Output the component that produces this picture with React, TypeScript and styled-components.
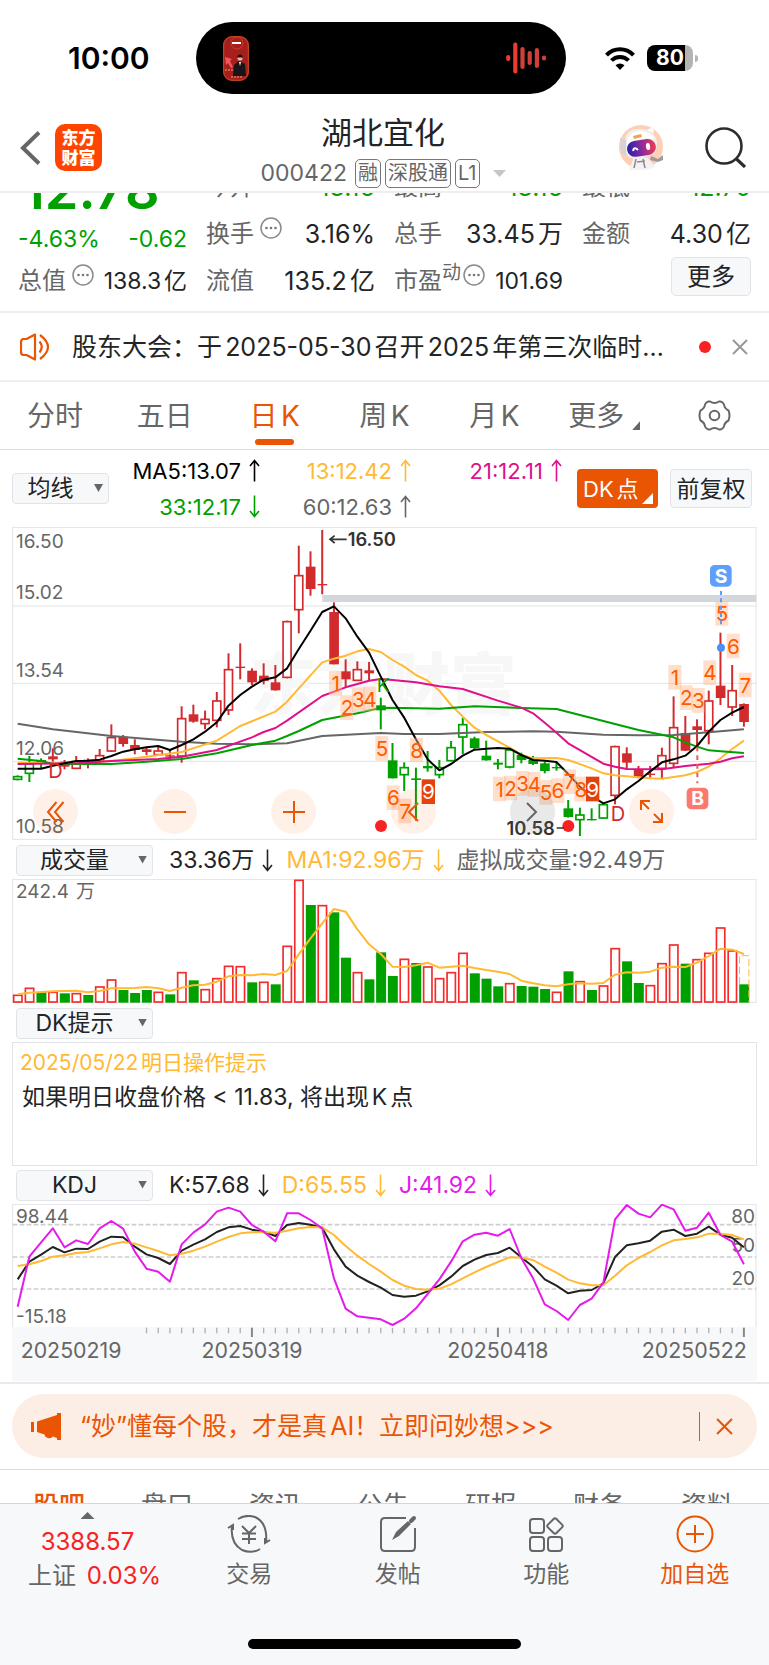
import React from "react";
import styled, { createGlobalStyle } from "styled-components";

const c = {
  accent: "#ea5504",
  text: "#222426",
  sub: "#666666",
  green: "#00a000",
  red: "#f82222",
  candle: "#d12b2e",
  gold: "#ffb933",
  pink: "#e0108c",
  violet: "#e41bea",
  line: "#e1e3e8",
  panel: "#f7f8fa",
};

const Global = createGlobalStyle`
  *, *::before, *::after { box-sizing: border-box; }
  body { margin: 0; background: #fff; color: ${c.text}; font-family: Inter, "Noto Sans CJK SC", sans-serif; text-autospace: normal; }
  button, select { font: inherit; color: inherit; margin: 0; }
  button { padding: 0; border: 0; background: none; cursor: pointer; }
  a { color: inherit; text-decoration: none; }
  h1, p { margin: 0; font-weight: 400; }
  svg { display: block; flex: none; }
`;

/* ---------- status bar ---------- */
const StatusBar = styled.div`
  display: grid;
  grid-template-columns: 196px 1fr 203px;
  align-items: center;
  height: 110px;
  padding-top: 6px;
`;
const Clock = styled.time`
  padding-left: 68px;
  font-size: 30px;
  line-height: 36px;
  font-weight: 600;
  color: #000;
`;
const Island = styled.div`
  display: flex;
  align-items: center;
  justify-content: space-between;
  height: 72px;
  padding: 0 20px 0 27px;
  border-radius: 36px;
  background: #000;
`;
const StatusIcons = styled.div`
  display: flex;
  align-items: center;
  gap: 12px;
  padding-left: 39px;
`;
const Battery = styled.div`
  display: flex;
  align-items: center;
  gap: 2px;
  &::after { content: ""; width: 3px; height: 7px; border-radius: 0 4px 4px 0; background: #b4b4b4; }
`;
const BatteryBody = styled.div`
  width: 46px;
  height: 26px;
  padding-left: 9px;
  border-radius: 8px;
  background: linear-gradient(90deg, #000 82%, #b4b4b4 82%);
  color: #fff;
  font-size: 21px;
  line-height: 26px;
  font-weight: 700;
`;

/* ---------- header ---------- */
const Header = styled.header`
  position: relative;
  z-index: 1;
  display: grid;
  grid-template-columns: 1fr auto 1fr;
  height: 83px;
  padding: 0 23px 0 20px;
  background: #fff;
  border-bottom: 2px solid #eeeeee;
`;
const HeaderSide = styled.div<{ $end?: boolean }>`
  display: flex;
  align-items: center;
  gap: ${(p) => (p.$end ? 41 : 14)}px;
  justify-content: ${(p) => (p.$end ? "flex-end" : "flex-start")};
  height: 75px;
`;
const AppLogo = styled.a`
  display: grid;
  place-content: center;
  width: 47px;
  height: 47px;
  border-radius: 10px;
  background: #ff4400;
  color: #fff;
  font-size: 17px;
  line-height: 20px;
  font-weight: 900;
  text-align: center;
`;
const TitleBlock = styled.div`
  display: flex;
  flex-direction: column;
  align-items: center;
`;
const Title = styled.h1`
  font-size: 31px;
  line-height: 45px;
`;
const SubTitle = styled.div`
  display: flex;
  align-items: center;
  gap: 4px;
  font-size: 23px;
  line-height: 36px;
  color: ${c.sub};
`;
const Code = styled.span`
  margin-right: 4px;
`;
const Badge = styled.span`
  height: 29px;
  padding: 0 2px;
  border: 1px solid #777;
  border-radius: 5px;
  font-size: 20px;
  line-height: 26px;
`;

/* ---------- quote figures ---------- */
const Quote = styled.section`
  overflow: hidden;
  padding: 0 18px 7px;
  border-bottom: 2px solid #eeeeee;
`;
const QuoteGrid = styled.div`
  display: grid;
  grid-template-columns: repeat(4, 1fr);
  grid-auto-rows: 47px;
  column-gap: 19px;
  margin-top: -30px;
`;
const PriceCell = styled.div`
  grid-row: span 2;
  display: flex;
  flex-direction: column;
  color: ${c.green};
`;
const Price = styled.strong`
  padding-left: 4px;
  font-size: 54px;
  line-height: 54px;
  font-weight: 600;
`;
const Change = styled.div`
  display: flex;
  justify-content: space-between;
  font-size: 23px;
  line-height: 44px;
`;
const Figure = styled.div<{ $green?: boolean; $compact?: boolean }>`
  display: flex;
  align-items: center;
  white-space: nowrap;
  font-size: 24px;
  line-height: 32px;
  color: ${c.sub};
  svg { margin: 0 0 11px 6px; }
  sup { font-size: 19px; line-height: 20px; margin-bottom: 15px; vertical-align: baseline; }
  sup + svg { margin-left: 2px; }
  b {
    margin-left: auto;
    font-weight: 400;
    font-size: ${(p) => (p.$compact ? 23 : 25)}px;
    color: ${(p) => (p.$green ? c.green : c.text)};
  }
`;
const MoreButton = styled.button`
  justify-self: end;
  align-self: start;
  width: 80px;
  height: 39px;
  border: 1px solid ${c.line};
  border-radius: 5px;
  background: ${c.panel};
  font-size: 24px;
  line-height: 34px;
`;

/* ---------- notice ---------- */
const Notice = styled.section`
  display: flex;
  align-items: center;
  height: 69px;
  padding: 0 21px 0 20px;
  border-bottom: 2px solid #eeeeee;
`;
const NoticeText = styled.a`
  flex: 1;
  min-width: 0;
  margin: 0 26px 0 20px;
  overflow: hidden;
  white-space: nowrap;
  text-overflow: ellipsis;
  font-size: 25px;
  line-height: 36px;
`;
const Dot = styled.span`
  width: 12px;
  height: 12px;
  margin-right: 21px;
  border-radius: 50%;
  background: ${c.red};
`;

/* ---------- tabs ---------- */
const Tabs = styled.nav`
  display: grid;
  grid-template-columns: repeat(7, 1fr);
  height: 68px;
  border-bottom: 1px solid #dcdee2;
`;
const Tab = styled.button<{ $active?: boolean }>`
  position: relative;
  display: flex;
  align-items: center;
  justify-content: center;
  gap: 8px;
  font-size: 28px;
  line-height: 40px;
  color: ${(p) => (p.$active ? c.accent : c.sub)};
  &::after {
    content: "";
    display: ${(p) => (p.$active ? "block" : "none")};
    position: absolute;
    bottom: 4px;
    width: 39px;
    height: 6px;
    border-radius: 3px;
    background: ${c.accent};
  }
`;
const Corner = styled.i`
  align-self: flex-end;
  width: 8px;
  height: 9px;
  margin-bottom: 19px;
  background: currentColor;
  clip-path: polygon(100% 0, 100% 100%, 0 100%);
`;

/* ---------- chart tool rows ---------- */
const Reading = styled.span<{ $color: string }>`
  display: flex;
  align-items: center;
  justify-content: flex-end;
  gap: 8px;
  white-space: nowrap;
  color: ${(p) => p.$color};
  font-size: 23px;
  line-height: 32px;
  text-autospace: no-autospace;
`;
const MaRow = styled.div`
  display: flex;
  align-items: center;
  height: 77px;
  padding: 0 17px 0 12px;
`;
const MaValues = styled.div`
  flex: 1;
  display: grid;
  grid-template-columns: repeat(3, 1fr);
  grid-auto-rows: 36px;
  ${Reading} { font-size: 22px; }
`;
const PlainButton = styled.button`
  width: 82px;
  height: 39px;
  margin-left: 12px;
  border: 1px solid ${c.line};
  border-radius: 4px;
  background: ${c.panel};
  font-size: 23px;
  line-height: 34px;
  white-space: nowrap;
`;
const DkButton = styled.button`
  display: flex;
  align-items: center;
  justify-content: space-between;
  width: 81px;
  height: 39px;
  margin-left: 15px;
  padding: 0 5px 0 6px;
  border-radius: 4px;
  background: ${c.accent};
  color: #fff;
  font-size: 22px;
  line-height: 34px;
  white-space: nowrap;
  ${Corner} { width: 11px; height: 11px; margin: 0 0 4px -8px; }
`;
const SelectBox = styled.div<{ $w: number }>`
  position: relative;
  width: ${(p) => p.$w}px;
  &::after {
    content: "";
    position: absolute;
    right: 6px;
    top: 11px;
    width: 9px;
    height: 8px;
    background: ${c.sub};
    clip-path: polygon(0 0, 100% 0, 50% 100%);
    pointer-events: none;
  }
  select {
    display: block;
    appearance: none;
    width: 100%;
    height: 31px;
    padding: 0 20px 2px 0;
    border: 1px solid ${c.line};
    border-radius: 4px;
    background: ${c.panel};
    font-size: 23px;
    line-height: 28px;
    text-align: center;
    text-align-last: center;
  }
`;
const ToolRow = styled.div`
  display: flex;
  align-items: center;
  gap: 16px;
  height: 38px;
  padding: 0 16px;
`;
const Readings = styled.div`
  display: flex;
  gap: 13px;
`;

/* ---------- charts ---------- */
const ChartBox = styled.figure`
  position: relative;
  margin: 0 12px 1px;
  > svg { width: 100%; height: auto; }
`;
const ChartControls = styled.div`
  position: absolute;
  left: 21px;
  right: 83px;
  bottom: 6px;
  display: flex;
  justify-content: space-between;
`;
const RoundButton = styled.button<{ $grey?: boolean }>`
  display: grid;
  place-items: center;
  width: 45px;
  height: 45px;
  border-radius: 50%;
  background: ${(p) => (p.$grey ? "rgba(120,120,120,.16)" : "rgba(255,90,0,.09)")};
  color: ${(p) => (p.$grey ? c.sub : c.accent)};
`;
const Tip = styled.section`
  height: 124px;
  margin: 0 12px;
  padding: 4px 7px;
  border: 1px solid ${c.line};
  p { padding-left: 2px; font-size: 23px; line-height: 36px; }
  p:first-child { padding: 0; font-size: 21px; line-height: 32px; color: ${c.gold}; }
`;

/* ---------- banner + lower tabs ---------- */
const BannerWrap = styled.section`
  padding: 10px 12px 11px;
  border-top: 2px solid #e9eaee;
  border-bottom: 1px solid #dddddd;
`;
const Banner = styled.div`
  display: flex;
  align-items: center;
  height: 64px;
  padding: 0 24px 0 19px;
  border-radius: 32px;
  background: #fdeee5;
  color: ${c.accent};
  font-size: 25px;
  line-height: 36px;
  a { flex: 1; margin-left: 18px; white-space: nowrap; }
  button { padding-left: 16px; border-left: 1px solid ${c.accent}; height: 29px; }
`;
const LowerTabs = styled.nav`
  display: grid;
  grid-template-columns: repeat(7, 1fr);
  height: 33px;
  padding: 18px 8px 0 5px;
  overflow: hidden;
  text-align: center;
  font-size: 26px;
  line-height: 36px;
  color: ${c.sub};
  a:first-child { color: ${c.accent}; font-weight: 500; }
`;

/* ---------- bottom navigation ---------- */
const Bottom = styled.footer`
  display: flex;
  flex-direction: column;
  justify-content: space-between;
  align-items: center;
  height: 162px;
  padding-bottom: 16px;
  border-top: 1px solid #d4d6da;
  background: ${c.panel};
`;
const NavRow = styled.nav`
  display: grid;
  grid-template-columns: 175px repeat(4, 1fr);
  align-self: stretch;
  color: ${c.sub};
`;
const NavItem = styled.a<{ $accent?: boolean }>`
  display: flex;
  flex-direction: column;
  align-items: center;
  gap: 5px;
  padding-top: 11px;
  font-size: 23px;
  line-height: 32px;
  color: ${(p) => (p.$accent ? c.accent : c.sub)};
`;
const IndexItem = styled.a`
  display: flex;
  flex-direction: column;
  align-items: center;
  padding-top: 8px;
  font-size: 24px;
  line-height: 34px;
  white-space: nowrap;
  em { font-style: normal; color: ${c.red}; }
  span { padding-left: 14px; }
  span em { margin-left: 4px; }
  &::before {
    content: "";
    width: 14px;
    height: 7px;
    margin-bottom: 6px;
    background: ${c.sub};
    clip-path: polygon(50% 0, 100% 100%, 0 100%);
  }
`;
const HomeBar = styled.div`
  width: 273px;
  height: 10px;
  border-radius: 5px;
  background: #000;
`;

/* ---------- icons ---------- */
const Arrow = ({ up }: { up?: boolean }) => (
  <svg width="11" height="23" viewBox="0 0 11 23" fill="none" stroke="currentColor" strokeWidth="1.600">
    <path d={up ? "M5.5 22.5V1.500M1 7L5.500 1.500L10 7" : "M5.500 .5V21.500M1 16L5.500 21.500L10 16"} />
  </svg>
);
const Dots = () => (
  <svg width="22" height="22" viewBox="0 0 22 22">
    <circle cx="11" cy="11" r="10" fill="none" stroke="#8a8a8a" strokeWidth="1.500" />
    {[6.5, 11, 15.5].map((x) => <circle key={x} cx={x} cy="11" r="1.300" fill="#777" />)}
  </svg>
);
const Cross = ({ size, color, w = 2 }: { size: number; color: string; w?: number }) => (
  <svg width={size} height={size} viewBox="0 0 16 16" stroke={color} strokeWidth={w}>
    <path d="M1 1L15 15M15 1L1 15" />
  </svg>
);
const Poster = () => (
  <svg width="26" height="45" viewBox="0 0 26 45">
    <rect width="26" height="45" rx="9" fill="#a81e1c" />
    <rect x=".7" y=".7" width="24.600" height="43.600" rx="8.500" fill="none" stroke="#b9521f" strokeWidth="1" />
    <circle cx="14" cy="7" r="6" fill="none" stroke="#c8501f" strokeWidth=".7" />
    <rect x="9" y="6" width="9" height="2" fill="#fff" />
    <path d="M2 21l7 2-2 2 3 6-2 1-3-5-2 2z" fill="#f0565c" />
    <circle cx="17" cy="22" r="2.600" fill="#e8b796" />
    <path d="M14 20.500q3-4 6 0l0 1h-6z" fill="#1b1010" />
    <path d="M10 40l1-11 5-4 6 3 1 12z" fill="#191417" />
    <path d="M16 26l1 4 1-4z" fill="#fff" />
    <path d="M2 34h9M8 41h12" stroke="#e6a85c" strokeWidth="1.200" strokeDasharray="2 1" />
  </svg>
);
const Wave = () => (
  <svg width="40" height="32" viewBox="0 0 40 32" stroke="#ea3a31" strokeWidth="4.200" strokeLinecap="round">
    <path d="M2.200 15v2M9.300 2.500v27" />
    <path d="M16.500 7v18M23.700 11v10M30.900 8v16M38 15.500v1" stroke="#d0403a" />
  </svg>
);
const Wifi = () => (
  <svg width="30" height="23" viewBox="0 0 30 23" fill="none" stroke="#000" strokeWidth="4">
    <path d="M1.500 8.200C9 .4 21 .4 28.500 8.200" />
    <path d="M6.500 13.500C11 8.700 19 8.700 23.500 13.500" />
    <path d="M15 23l-4.500-4.800q4.500-3.600 9 0z" fill="#000" stroke="none" />
  </svg>
);
const Robot = () => (
  <svg width="45" height="45" viewBox="0 0 45 45">
    <defs>
      <linearGradient id="visor" x1="0" x2="1"><stop offset="0" stopColor="#2420a8" /><stop offset=".5" stopColor="#8a2aa0" /><stop offset="1" stopColor="#ef3b50" /></linearGradient>
    </defs>
    <circle cx="22" cy="22" r="22" fill="#fdd0b6" />
    <path d="M15 32l-5 13q12 3 26-3l-7-9z" fill="#f4f2f2" />
    <path d="M17 34l-2 9M24 34l2 9M18 37l8-1" stroke="#8d8a8c" strokeWidth="1.500" fill="none" />
    <path d="M32 31l7 3 5-4v5l-5 2-8-2z" fill="#9b9a9e" />
    <path d="M28 5l6-3 1 6z" fill="#fff" />
    <path d="M6 16Q7 3 21 4Q36 4 38 17Q39 29 30 31Q18 36 10 32Q5 28 6 16z" fill="#f1eff0" />
    <path d="M8 15Q11 6 22 6Q33 7 35 14Q20 12 8 20z" fill="#fff" />
    <path d="M1 13l6 2 0 16-5-3z" fill="#d5d3d6" />
    <path d="M14 11l8-2 1 3-8 2z" fill="#f4a24f" />
    <rect x="8" y="15" width="29" height="16" rx="8" transform="rotate(-8 22 23)" fill="url(#visor)" />
    <path d="M14 26q1-5 5-1" fill="none" stroke="#fff" strokeWidth="2" />
    <rect x="27" y="18" width="4" height="7" rx="2" fill="#fff" transform="rotate(-8 29 21)" />
  </svg>
);
const Gear = () => (
  <svg width="33" height="31" viewBox="0 0 33 31" fill="none" stroke="#666" strokeWidth="2">
    <path d="M10.500 1.500H12Q16.500 4.500 21 1.500H22.500Q25 2 26 4.500Q26.500 8.500 30.500 10.500Q32.500 15.500 30.500 20.500Q26.500 22.500 26 26.500Q25 29 22.500 29.500H21Q16.500 26.500 12 29.500H10.500Q8 29 7 26.500Q6.500 22.500 2.500 20.500Q.5 15.500 2.500 10.500Q6.500 8.500 7 4.500Q8 2 10.500 1.500z" />
    <circle cx="16.500" cy="15.500" r="4.800" />
  </svg>
);
const Speaker = () => (
  <svg width="32" height="28" viewBox="0 0 32 28" fill="none" stroke={c.accent} strokeWidth="2.200" strokeLinejoin="round">
    <path d="M15 1.500L6.500 6H3Q1 6.500 1 9V19Q1 21.500 3 22H6.500L15 26.500z" />
    <path d="M19.500 8.500Q24 14 19.500 19.500M20 2Q36 14 20 26" />
  </svg>
);
const Horn = () => (
  <svg width="31" height="27" viewBox="0 0 31 27" fill={c.accent}>
    <rect x="0" y="9" width="3" height="10" />
    <path d="M6 8.500L26 2V0h4v27h-4v-2l-4-1.500q-2 2.500-5 1.500-3-.5-3.500-3.500L6 19z" />
  </svg>
);

/* ---------- chart data, in chart units (three units to a layout pixel) ---------- */
const X0 = 53;
const STEP = 35.14;
const COUNT = 63;
const xAt = (i: number) => X0 + i * STEP;
const path = (v: [number, number][]) => "M" + v.map(([i, y]) => `${xAt(i).toFixed(1)} ${y}`).join("L");
const seq = (v: number[]): [number, number][] => v.map((y, i) => [i, y]);

// kind (r/g hollow, R/G filled), high, low, body top, body bottom
type Candle = [string, number, number, number, number];
const candles: Candle[] = [
  ["g", 976, 991, 980, 988], ["g", 918, 996, 942, 970], ["G", 925, 955, 930, 937], ["R", 895, 935, 919, 928],
  ["R", 930, 958, 935, 950], ["r", 918, 957, 935, 955], ["R", 925, 955, 929, 934], ["r", 897, 940, 917, 932],
  ["r", 823, 906, 863, 903], ["R", 855, 890, 860, 882], ["R", 868, 913, 885, 900], ["R", 893, 915, 898, 906],
  ["r", 890, 918, 903, 914], ["R", 900, 930, 916, 920], ["r", 769, 938, 806, 918], ["R", 764, 818, 793, 815],
  ["r", 782, 838, 808, 821], ["r", 726, 832, 753, 811], ["r", 610, 795, 659, 780], ["R", 580, 688, 650, 654],
  ["R", 655, 705, 662, 697], ["R", 640, 703, 677, 693], ["R", 645, 722, 697, 721], ["r", 512, 685, 515, 682],
  ["r", 287, 550, 377, 479], ["R", 304, 437, 350, 417], ["R", 240, 433, 402, 406], ["R", 457, 643, 486, 643],
  ["R", 628, 712, 664, 688], ["r", 634, 693, 659, 691], ["R", 636, 690, 661, 670], ["G", 743, 838, 766, 781],
  ["G", 879, 985, 931, 985], ["g", 937, 1023, 953, 974], ["G", 953, 1112, 985, 990], ["G", 903, 965, 948, 955],
  ["g", 930, 985, 953, 974], ["g", 873, 934, 893, 932], ["g", 803, 912, 824, 861], ["G", 860, 900, 865, 894],
  ["G", 872, 932, 917, 931], ["G", 927, 958, 938, 944], ["g", 895, 955, 900, 951], ["G", 908, 940, 915, 930],
  ["G", 918, 945, 930, 942], ["G", 935, 970, 940, 963], ["G", 935, 962, 951, 955], ["G", 1050, 1103, 1075, 1101],
  ["g", 1073, 1158, 1095, 1109], ["G", 1075, 1111, 1107, 1111], ["g", 1060, 1106, 1064, 1104], ["r", 887, 1063, 890, 1036],
  ["R", 892, 960, 910, 938], ["R", 948, 985, 957, 982], ["R", 948, 983, 971, 975], ["r", 893, 985, 917, 955],
  ["r", 739, 952, 833, 940], ["R", 798, 903, 849, 902], ["R", 808, 890, 829, 840], ["r", 722, 883, 753, 842],
  ["R", 548, 765, 707, 744], ["r", 645, 798, 722, 771], ["R", 760, 830, 762, 816],
];

const ma5 = seq([956, 956, 956, 947, 940, 933, 932, 929, 918, 905, 898, 892, 888, 900, 885, 868, 845, 817, 767, 735, 710, 689, 682, 655, 597, 542, 486, 469, 505, 560, 608, 680, 750, 803, 868, 928, 961, 942, 917, 899, 896, 894, 896, 915, 930, 932, 936, 972, 1010, 1038, 1060, 1048, 1018, 993, 964, 937, 928, 917, 888, 845, 810, 788, 771]);
const ma13: [number, number][] = [[0, 938], [4, 940], [8, 933], [11, 920], [14, 906], [17, 872], [19, 828], [22, 785], [23, 755], [24, 715], [26, 637], [27, 626], [28, 617], [29, 604], [30, 597], [31, 606], [32, 630], [33, 650], [34, 675], [35, 692], [36, 722], [37, 765], [38, 800], [39, 833], [40, 855], [42, 893], [43, 914], [44, 925], [46, 924], [47, 930], [49, 955], [50, 970], [51, 976], [52, 979], [54, 985], [55, 986], [56, 981], [57, 976], [58, 966], [59, 950], [60, 925], [61, 897], [62, 872]];
const ma21: [number, number][] = [[0, 942], [5, 940], [8, 933], [12, 927], [14, 920], [17, 900], [20, 862], [21, 846], [22, 834], [23, 812], [26, 738], [28, 712], [30, 692], [31, 687], [32, 690], [34, 697], [36, 709], [38, 717], [41, 752], [43, 773], [44, 790], [45, 818], [46, 848], [47, 880], [50, 941], [51, 950], [52, 957], [55, 958], [57, 948], [59, 941], [60, 935], [61, 925], [62, 919]];
const ma33: [number, number][] = [[0, 926], [2, 933], [3, 942], [8, 942], [11, 935], [14, 927], [17, 910], [20, 885], [22, 872], [23, 858], [24, 843], [26, 810], [29, 790], [31, 773], [33, 774], [36, 776], [39, 769], [43, 774], [46, 777], [50, 813], [53, 840], [55, 854], [56, 862], [57, 877], [58, 890], [59, 901], [60, 904], [62, 909]];
const ma60: [number, number][] = [[0, 821], [3, 838], [8, 858], [14, 875], [17, 881], [20, 883], [23, 880], [26, 858], [31, 849], [33, 852], [36, 852], [40, 846], [44, 844], [46, 845], [50, 854], [53, 856], [56, 855], [59, 847], [62, 838]];

const counts: [string, number, number][] = [
  ["1", 1007, 700], ["2", 1041, 773], ["3", 1075, 749], ["4", 1110, 747], ["5", 1146, 895], ["6", 1180, 1043], ["7", 1215, 1083],
  ["8", 1250, 900], ["1", 1499, 1017], ["2", 1532, 1014], ["3", 1568, 1000], ["4", 1603, 1003], ["5", 1638, 1027], ["6", 1674, 1022],
  ["7", 1709, 995], ["8", 1743, 1017], ["1", 2025, 682], ["2", 2059, 743], ["3", 2095, 751], ["4", 2130, 668], ["5", 2166, 490],
  ["6", 2200, 588], ["7", 2236, 705],
];

const volumes = "r465 r444 G457 r456 G460 r460 G465 r440 r419 G450 G459 G450 r456 G463 r397 G421 r448 r415 r378 r379 G427 r426 G433 r318 r120 G195 r196 G217 G353 r397 G418 G337 G408 r357 G369 r380 r415 r397 r339 G400 G416 G439 r430 G438 G440 G447 r456 G394 r424 G450 r437 r325 G364 G429 r436 r370 r314 G371 r358 r339 r263 r332 G433".split(" ");
const volMa = seq([463, 458, 456, 454, 453, 452, 457, 453, 445, 445, 444, 441, 445, 453, 443, 436, 434, 425, 409, 405, 406, 402, 405, 393, 343, 295, 250, 207, 215, 268, 313, 342, 380, 381, 376, 368, 383, 380, 377, 384, 390, 395, 402, 422, 430, 436, 439, 433, 430, 431, 429, 404, 397, 398, 395, 383, 380, 381, 368, 348, 326, 329, 342]);

const kLine = seq([328, 275, 254, 231, 247, 236, 237, 215, 200, 202, 230, 253, 264, 282, 242, 224, 208, 186, 172, 168, 179, 185, 198, 165, 159, 164, 173, 238, 290, 317, 336, 353, 375, 380, 377, 364, 346, 320, 288, 269, 255, 249, 233, 262, 290, 328, 347, 370, 362, 360, 340, 261, 226, 220, 212, 185, 179, 198, 191, 170, 194, 203, 232]);
const dLine = seq([288, 283, 273, 260, 256, 249, 246, 235, 223, 216, 221, 232, 243, 256, 251, 242, 230, 215, 201, 190, 187, 187, 188, 182, 175, 171, 172, 195, 228, 257, 282, 305, 330, 347, 357, 359, 356, 343, 325, 307, 291, 276, 262, 263, 270, 290, 308, 329, 340, 346, 346, 317, 286, 264, 246, 226, 211, 207, 202, 191, 191, 195, 208]);
const jLine = seq([410, 260, 217, 175, 232, 211, 222, 175, 153, 176, 245, 296, 305, 335, 223, 188, 163, 125, 113, 125, 165, 185, 214, 130, 130, 150, 175, 325, 416, 439, 443, 448, 465, 446, 415, 372, 328, 275, 214, 194, 188, 197, 177, 264, 325, 403, 423, 450, 405, 386, 338, 148, 105, 131, 142, 104, 118, 182, 173, 128, 195, 215, 283]);

const ChartText = styled.text<{ $size?: number }>`
  font-size: ${(p) => p.$size ?? 57}px;
  fill: ${c.sub};
`;
const Line = ({ d, color }: { d: string; color: string }) => (
  <path d={d} fill="none" stroke={color} strokeWidth="6" strokeLinejoin="round" />
);

const PriceChart = () => (
  <svg viewBox="36 231 2235 939" role="img" aria-label="日K线图">
    <g stroke={c.line} strokeWidth="3" fill="none">
      <path d="M38 468H2268M38 700H2268M38 934H2268" />
      <rect x="38" y="232" width="2230" height="936" />
    </g>
    <text x="750" y="778" fontSize="200" fontWeight="900" fill="#f7f7f7">东方财富</text>
    <rect x="967" y="435" width="1302" height="21" fill="#d3d7dc" />
    {([["16.50", 295], ["15.02", 447], ["13.54", 681], ["12.06", 915], ["10.58", 1149]] as [string, number][]).map(([t, y]) => (
      <ChartText key={t} x="48" y={y}>{t}</ChartText>
    ))}
    {candles.map(([k, hi, lo, top, bot], i) => {
      const x = xAt(i);
      const col = k.toLowerCase() === "r" ? c.candle : c.green;
      const hollow = k === "r" || k === "g";
      return (
        <g key={i} stroke={col} strokeWidth="6">
          <path d={`M${x} ${hi}V${lo}`} />
          {hollow
            ? <rect x={x - 12} y={top} width="24" height={bot - top} fill="#fff" strokeWidth="5" />
            : <rect x={x - 14} y={top} width="29" height={bot - top} fill={col} stroke="none" />}
        </g>
      );
    })}
    <Line d={path(ma60)} color="#666" />
    <Line d={path(ma13)} color={c.gold} />
    <Line d={path(ma33)} color={c.green} />
    <Line d={path(ma21)} color={c.pink} />
    <Line d={path(ma5)} color="#000" />
    {counts.map(([t, x, y], i) => (
      <g key={i}>
        <rect x={x - 20} y={y - 37} width="39" height="74" fill="#ffb88c" fillOpacity=".45" />
        <text x={x} y={y + 23} textAnchor="middle" fontSize="62" fill="#ff5a00">{t}</text>
      </g>
    ))}
    {[[1285, 1025], [1778, 1017]].map(([x, y]) => (
      <g key={x}>
        <rect x={x - 20} y={y - 37} width="40" height="74" fill="#e2420e" />
        <text x={x} y={y + 23} textAnchor="middle" fontSize="62" fill="#fff">9</text>
      </g>
    ))}
    <text x="1130" y="726" fontSize="58" fill={c.green}>K</text>
    <text x="145" y="984" fontSize="60" fill={c.candle}>D</text>
    <text x="1832" y="1112" fontSize="60" fill={c.candle}>D</text>
    <path d="M2163 423V530" stroke="#5b9df8" strokeWidth="6" strokeDasharray="12 10" />
    <circle cx="2163" cy="593" r="12" fill="#4b8ff0" />
    <rect x="2130" y="345" width="65" height="65" rx="14" fill="#5f9ffb" />
    <text x="2163" y="398" textAnchor="middle" fontSize="58" fontWeight="700" fill="#fff">S</text>
    <path d="M2092 890V1000" stroke="#e4605a" strokeWidth="6" strokeDasharray="14 12" />
    <rect x="2060" y="1013" width="65" height="65" rx="14" fill="#fb7a6c" />
    <text x="2093" y="1066" textAnchor="middle" fontSize="58" fontWeight="700" fill="#fff">B</text>
    <circle cx="1143" cy="1128" r="18" fill={c.red} />
    <circle cx="1705" cy="1128" r="18" fill={c.red} />
    <path d="M1040 268H992M1004 257L990 268L1004 279M1670 1134H1692" stroke="#333" strokeWidth="5" fill="none" />
    <text x="1043" y="289" fontSize="55" fontWeight="600" fill="#333">16.50</text>
    <text x="1664" y="1154" textAnchor="end" fontSize="55" fontWeight="600" fill="#333">10.58</text>
  </svg>
);

const VolumeChart = () => (
  <svg viewBox="36 117 2235 372" role="img" aria-label="成交量图">
    <rect x="38" y="118" width="2230" height="369" fill="none" stroke={c.line} strokeWidth="3" />
    <ChartText x="48" y="174">242.4万</ChartText>
    {volumes.map((v, i) => {
      const y = Number(v.slice(1));
      const x = xAt(i);
      return v[0] === "r"
        ? <rect key={i} x={x - 12} y={y + 1} width="25" height={485 - y} fill="#fff" stroke="#f52a2a" strokeWidth="5" />
        : <rect key={i} x={x - 14} y={y} width="30" height={488 - y} fill={c.green} />;
    })}
    <path d={`M${xAt(62) - 13} 433V347H${xAt(62) + 15}V487`} fill="none" stroke={c.gold} strokeWidth="3" strokeDasharray="22 9" />
    <Line d={path(volMa)} color={c.gold} />
  </svg>
);

const KdjChart = () => (
  <svg viewBox="36 102 2235 369" role="img" aria-label="KDJ指标图">
    <path d="M38 471V103H2268V471" fill="none" stroke={c.line} strokeWidth="3" />
    <path d="M38 164H2268M38 261H2268M38 357H2268" stroke="#cdcdcd" strokeWidth="5" strokeDasharray="14 7" />
    <ChartText x="48" y="158">98.44</ChartText>
    <ChartText x="48" y="460">-15.18</ChartText>
    <ChartText x="2265" y="158" textAnchor="end">80</ChartText>
    <ChartText x="2265" y="247" textAnchor="end">50</ChartText>
    <ChartText x="2265" y="345" textAnchor="end">20</ChartText>
    <Line d={path(kLine)} color="#222" />
    <Line d={path(dLine)} color={c.gold} />
    <Line d={path(jLine)} color={c.violet} />
  </svg>
);

const MAJOR = [20, 41, 62];
const TimeAxis = () => (
  <svg viewBox="36 471 2235 162" role="img" aria-label="日期轴">
    <rect x="36" y="471" width="2235" height="162" fill={c.panel} />
    {Array.from({ length: COUNT - 11 }, (_, n) => n + 11).map((i) => {
      const major = MAJOR.includes(i);
      return <path key={i} d={`M${xAt(i)} 473V${major ? 501 : 490}`} stroke={major ? "#888" : "#b0b0b0"} strokeWidth={major ? 6 : 4} />;
    })}
    <ChartText $size={64} x="62" y="565">20250219</ChartText>
    <ChartText $size={64} x={xAt(20)} y="565" textAnchor="middle">20250319</ChartText>
    <ChartText $size={64} x={xAt(41)} y="565" textAnchor="middle">20250418</ChartText>
    <ChartText $size={64} x="2240" y="565" textAnchor="end">20250522</ChartText>
  </svg>
);

const Picker = ({ label, value, w = 137 }: { label: string; value: string; w?: number }) => (
  <SelectBox $w={w}>
    <select aria-label={label} defaultValue={value}><option>{value}</option></select>
  </SelectBox>
);

const stroke = { fill: "none", stroke: "currentColor", strokeWidth: 2 };

export default function App() {
  return (
    <>
      <Global />
      <StatusBar>
        <Clock>10:00</Clock>
        <Island><Poster /><Wave /></Island>
        <StatusIcons><Wifi /><Battery><BatteryBody>80</BatteryBody></Battery></StatusIcons>
      </StatusBar>

      <Header>
        <HeaderSide>
          <button aria-label="返回">
            <svg width="21" height="34" viewBox="0 0 21 34" fill="none" stroke="#666" strokeWidth="4"><path d="M19 1.500L3 17L19 32.500" /></svg>
          </button>
          <AppLogo href="#">东方<br />财富</AppLogo>
        </HeaderSide>
        <TitleBlock>
          <Title>湖北宜化</Title>
          <SubTitle>
            <Code>000422</Code><Badge>融</Badge><Badge>深股通</Badge><Badge>L1</Badge>
            <svg width="22" height="7" viewBox="0 0 22 7"><path d="M9 0H22L15.500 7z" fill="#c6c6c6" /></svg>
          </SubTitle>
        </TitleBlock>
        <HeaderSide $end>
          <button aria-label="智能助手"><Robot /></button>
          <button aria-label="搜索">
            <svg width="41" height="41" viewBox="0 0 41 41" fill="none" stroke="#2b2d2f" strokeWidth="2.600"><circle cx="19" cy="19" r="17.500" /><path d="M31 31.500L40 40" strokeWidth="3.200" /></svg>
          </button>
        </HeaderSide>
      </Header>

      <Quote>
        <QuoteGrid>
          <PriceCell>
            <Price>12.78</Price>
            <Change><span>-4.63%</span><span>-0.62</span></Change>
          </PriceCell>
          <Figure $green>今开<b>13.16</b></Figure>
          <Figure $green>最高<b>13.16</b></Figure>
          <Figure $green>最低<b>12.70</b></Figure>
          <Figure>换手<Dots /><b>3.16%</b></Figure>
          <Figure>总手<b>33.45万</b></Figure>
          <Figure>金额<b>4.30亿</b></Figure>
          <Figure $compact>总值<Dots /><b>138.3亿</b></Figure>
          <Figure>流值<b>135.2亿</b></Figure>
          <Figure $compact>市盈<sup>动</sup><Dots /><b>101.69</b></Figure>
          <MoreButton>更多</MoreButton>
        </QuoteGrid>
      </Quote>

      <Notice>
        <Speaker />
        <NoticeText href="#">股东大会：于2025-05-30召开2025年第三次临时股东大会</NoticeText>
        <Dot />
        <button aria-label="关闭公告"><Cross size={16} color="#999" /></button>
      </Notice>

      <Tabs>
        <Tab>分时</Tab>
        <Tab>五日</Tab>
        <Tab $active>日K</Tab>
        <Tab>周K</Tab>
        <Tab>月K</Tab>
        <Tab>更多<Corner /></Tab>
        <Tab aria-label="设置"><Gear /></Tab>
      </Tabs>

      <MaRow>
        <Picker label="主图指标" value="均线" w={97} />
        <MaValues>
          <Reading $color="#000">MA5:13.07<Arrow up /></Reading>
          <Reading $color={c.gold}>13:12.42<Arrow up /></Reading>
          <Reading $color={c.pink}>21:12.11<Arrow up /></Reading>
          <Reading $color={c.green}>33:12.17<Arrow /></Reading>
          <Reading $color={c.sub}>60:12.63<Arrow up /></Reading>
        </MaValues>
        <DkButton>DK点<Corner /></DkButton>
        <PlainButton>前复权</PlainButton>
      </MaRow>
      <ChartBox>
        <PriceChart />
        <ChartControls>
          <RoundButton aria-label="最早"><svg width="20" height="22" viewBox="0 0 20 22" {...stroke}><path d="M10.500 1L2 11L10.500 21M17.500 1L9 11L17.500 21" /></svg></RoundButton>
          <RoundButton aria-label="缩小"><svg width="22" height="22" viewBox="0 0 22 22" {...stroke}><path d="M0 11H22" /></svg></RoundButton>
          <RoundButton aria-label="放大"><svg width="22" height="22" viewBox="0 0 22 22" {...stroke}><path d="M0 11H22M11 0V22" /></svg></RoundButton>
          <RoundButton aria-label="向左"><svg width="12" height="20" viewBox="0 0 12 20" {...stroke}><path d="M11 1L2 10L11 19" /></svg></RoundButton>
          <RoundButton $grey aria-label="向右"><svg width="12" height="20" viewBox="0 0 12 20" {...stroke}><path d="M1 1L10 10L1 19" /></svg></RoundButton>
          <RoundButton aria-label="全屏"><svg width="23" height="23" viewBox="0 0 23 23" {...stroke}><path d="M1 10V1H10M1 1L9 9M22 13V22H13M22 22L14 14" /></svg></RoundButton>
        </ChartControls>
      </ChartBox>

      <ToolRow>
        <Picker label="副图一" value="成交量" />
        <Readings>
          <Reading $color={c.text}>33.36万<Arrow /></Reading>
          <Reading $color={c.gold}>MA1:92.96万<Arrow /></Reading>
          <Reading $color={c.sub}>虚拟成交量:92.49万</Reading>
        </Readings>
      </ToolRow>
      <ChartBox><VolumeChart /></ChartBox>

      <ToolRow><Picker label="副图二" value="DK提示" /></ToolRow>
      <Tip>
        <p>2025/05/22明日操作提示</p>
        <p>如果明日收盘价格 &lt; 11.83, 将出现K点</p>
      </Tip>

      <ToolRow>
        <Picker label="副图三" value="KDJ" />
        <Readings>
          <Reading $color={c.text}>K:57.68<Arrow /></Reading>
          <Reading $color={c.gold}>D:65.55<Arrow /></Reading>
          <Reading $color={c.violet}>J:41.92<Arrow /></Reading>
        </Readings>
      </ToolRow>
      <ChartBox>
        <KdjChart />
        <TimeAxis />
      </ChartBox>

      <BannerWrap>
        <Banner>
          <Horn />
          <a href="#">“妙”懂每个股，才是真AI！立即问妙想&gt;&gt;&gt;</a>
          <button aria-label="关闭横幅"><Cross size={17} color={c.accent} /></button>
        </Banner>
      </BannerWrap>

      <LowerTabs>
        {["股吧", "盘口", "资讯", "公告", "研报", "财务", "资料"].map((t) => <a key={t} href="#">{t}</a>)}
      </LowerTabs>

      <Bottom>
        <NavRow>
          <IndexItem href="#"><em>3388.57</em><span>上证 <em>0.03%</em></span></IndexItem>
          <NavItem href="#">
            <svg width="44" height="38" viewBox="0 0 44 38" {...stroke}>
              <path d="M11 4Q19 -1 28 2Q41 8 39 28M43 25L38 28V23M33 34Q25 39 15 35Q3 28 5 11M1 13L6 10V15" />
              <path d="M15 11L22 18L29 11M22 18V29M15 18.500H29M15 24H29" />
            </svg>
            交易
          </NavItem>
          <NavItem href="#">
            <svg width="38" height="38" viewBox="0 0 38 38" {...stroke}>
              <path d="M27 3H6Q2 3 2 7V32Q2 36 6 36H32Q36 36 36 32V13" />
              <path d="M13 25L17 17L29 6L32 9L20 21z" fill="currentColor" stroke="none" />
              <path d="M32 6L35 3" strokeWidth="4" strokeLinecap="round" />
            </svg>
            发帖
          </NavItem>
          <NavItem href="#">
            <svg width="36" height="38" viewBox="0 0 36 38" {...stroke}>
              <rect x="2" y="4" width="14" height="14" rx="3" /><rect x="2" y="22" width="14" height="14" rx="3" /><rect x="20" y="22" width="14" height="14" rx="3" />
              <rect x="21" y="5" width="12" height="12" rx="2" transform="rotate(45 27 11)" />
            </svg>
            功能
          </NavItem>
          <NavItem href="#" $accent>
            <svg width="38" height="38" viewBox="0 0 38 38" {...stroke}><circle cx="19" cy="19" r="17.500" /><path d="M10 19H28M19 10V28" /></svg>
            加自选
          </NavItem>
        </NavRow>
        <HomeBar />
      </Bottom>
    </>
  );
}
